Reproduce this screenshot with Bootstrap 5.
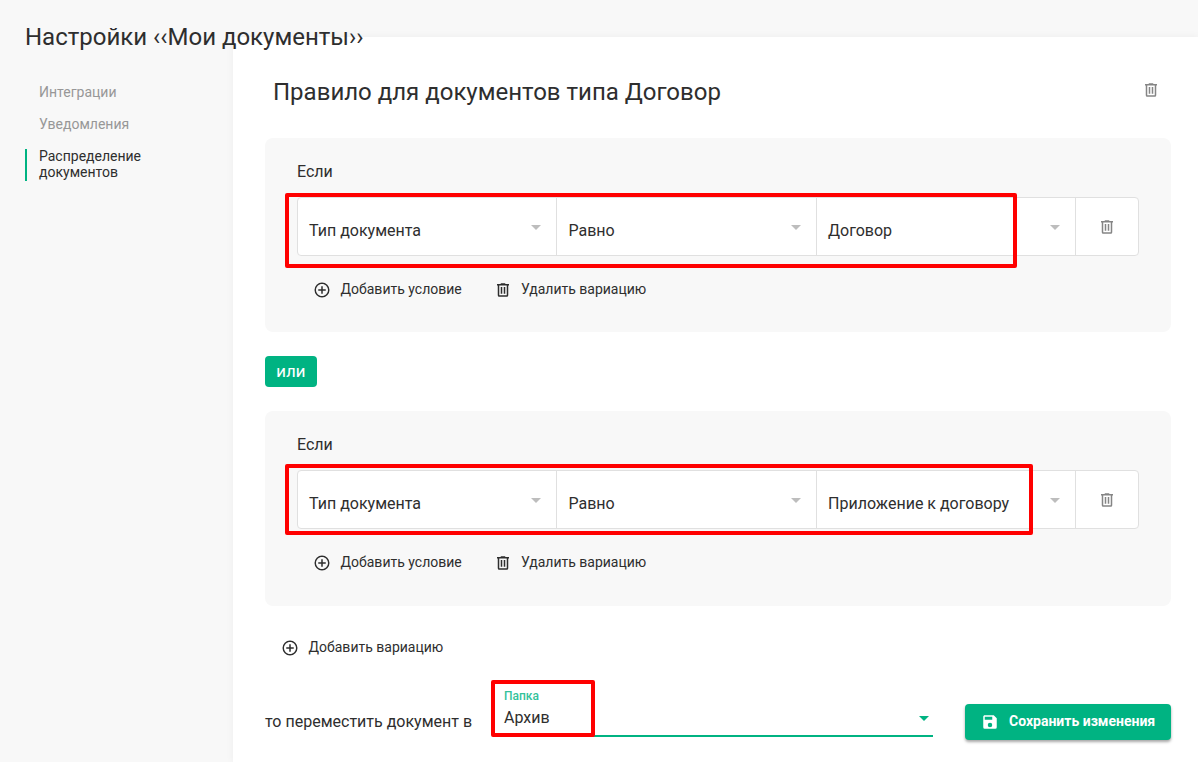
<!DOCTYPE html>
<html lang="ru">
<head>
<meta charset="utf-8">
<meta name="viewport" content="width=device-width, initial-scale=1">
<title>Настройки</title>
<link href="https://cdn.jsdelivr.net/npm/bootstrap@5.3.0/dist/css/bootstrap.min.css" rel="stylesheet">
<style>
body{background:#f8f8f8;color:#2e2e2e;font-family:Roboto,"Liberation Sans",sans-serif;font-size:16px;line-height:24px;height:762px;overflow:hidden}
svg{display:block;fill:currentColor;flex:none}
.page-title{height:37px;padding:21px 0 0 25px;font-size:24px;line-height:32px;font-weight:400;z-index:2;white-space:nowrap}
.side-menu{width:233px;padding:47px 0 0 25px}
.side-menu .nav-link{color:#979797;font-size:14px;line-height:16px;padding:0 0 0 14px;margin-bottom:16px;width:150px}
.side-menu .nav-link.active{color:#2e2e2e;background:linear-gradient(#00b382,#00b382) 0 1px/2px 100% no-repeat;padding-bottom:1px}
.sheet{height:725px;background:#fff;padding:39px 27px 0 32px;box-shadow:0 0 8px rgba(0,0,0,.05);min-width:0}
.sheet-head{height:62px}
.sheet-head svg{margin:5px 11px 0 0}
.rule-title{font-size:24px;line-height:32px;font-weight:400;padding-left:8px}
.muted-icon{color:#858585}
.panel{background:#f8f8f8;border-radius:8px;height:194px;padding:22px 32px 0}
.panel-last{height:195px}
.panel-last .actions svg:first-child{margin-top:2px}
.cond{height:59px;margin-top:13px;background:#fff;border:1px solid #e0e0e0;border-radius:4px;z-index:0}
.cell{width:259px;border-right:1px solid #e0e0e0;padding:8px 8px 0 11px}
.cell-mid{width:260px;padding-left:11.5px}
.cell svg{color:#bdbdbd;margin-top:-8px}
.cell-del{width:62px}
.frame{position:absolute;border:4px solid #f00;border-radius:2px;pointer-events:none;z-index:3}
.frame-1{left:-13px;top:-5px;width:732px;height:75px}
.frame-2{left:-13px;top:-7px;width:748px;height:71px}
.frame-3{left:0;top:-1px;width:104px;height:57px}
.flat{font-size:14px;line-height:20px}
.flat svg{margin-top:1px}
.actions{padding:23px 0 0 16px}
.actions span{margin-left:9.5px}
.actions span + svg{margin-left:32.5px}
.actions svg + span:last-child:not(:nth-child(2)){margin-left:8.8px}
.or-badge{background:#00b382;color:#fff;font-size:13px;font-weight:500;letter-spacing:.5px;padding-top:2px;width:52px;height:31px;border-radius:4px;margin:24px 0}
.target-row{margin-top:24px}
.target-text{width:226px;padding-top:29px}
.folder{width:442px;height:56px}
.folder-line{height:56px;margin-left:4px;width:438px;border-bottom:2px solid #00b382}
.folder-line svg{color:#00b382;margin:25px -3px 0 0}
.folder-name{font-size:12px;font-weight:500;line-height:14px;color:#33c29b;padding:8px 0 0 9px}
.folder-val{line-height:24px;padding-left:9px;margin-top:3px}
.save{background:#00b382;color:#fff;width:206px;height:36px;margin-top:23px;padding-left:16px;border-radius:4px;font-size:14px;font-weight:700;box-shadow:0 2px 3px rgba(0,0,0,.35)}
.save span{margin:-2px 0 0 10px}
</style>
</head>
<body>
<svg class="d-none">
<symbol id="trash" viewBox="0 0 24 24"><path d="M9,3V4H4V6H5V19A2,2 0 0,0 7,21H17A2,2 0 0,0 19,19V6H20V4H15V3H9M7,6H17V19H7V6M9,8V17H11V8H9M13,8V17H15V8H13Z"/></symbol>
<symbol id="plus" viewBox="0 0 24 24"><path d="M12,20C7.59,20 4,16.41 4,12C4,7.59 7.59,4 12,4C16.41,4 20,7.59 20,12C20,16.41 16.41,20 12,20M12,2A10,10 0 0,0 2,12A10,10 0 0,0 12,22A10,10 0 0,0 22,12A10,10 0 0,0 12,2M13,7H11V11H7V13H11V17H13V13H17V11H13V7Z"/></symbol>
<symbol id="down" viewBox="0 0 24 24"><path d="M7,10L12,15L17,10H7Z"/></symbol>
<symbol id="disk" viewBox="0 0 24 24"><path d="M15,9H5V5H15M12,19A3,3 0 0,1 9,16A3,3 0 0,1 12,13A3,3 0 0,1 15,16A3,3 0 0,1 12,19M17,3H5C3.89,3 3,3.9 3,5V19A2,2 0 0,0 5,21H19A2,2 0 0,0 21,19V7L17,3Z"/></symbol>
</svg>
<h1 class="page-title position-relative m-0">Настройки ‹‹Мои документы››</h1>
<div class="d-flex">
  <nav class="side-menu nav flex-column flex-shrink-0">
    <a class="nav-link">Интеграции</a>
    <a class="nav-link">Уведомления</a>
    <a class="nav-link active">Распределение документов</a>
  </nav>
  <main class="sheet flex-grow-1">
    <div class="sheet-head d-flex align-items-start justify-content-between">
      <h2 class="rule-title m-0">Правило для документов типа Договор</h2>
      <svg class="muted-icon" width="18" height="18"><use href="#trash"/></svg>
    </div>
    <section class="panel">
      <div>Если</div>
      <div class="cond d-flex position-relative">
        <div class="cell d-flex align-items-center justify-content-between"><span>Тип документа</span><svg width="24" height="24"><use href="#down"/></svg></div>
        <div class="cell cell-mid d-flex align-items-center justify-content-between"><span>Равно</span><svg width="24" height="24"><use href="#down"/></svg></div>
        <div class="cell d-flex align-items-center justify-content-between"><span>Договор</span><svg width="24" height="24"><use href="#down"/></svg></div>
        <div class="cell-del muted-icon d-flex align-items-center justify-content-center"><svg width="18" height="18"><use href="#trash"/></svg></div>
        <div class="frame frame-1"></div>
      </div>
      <div class="flat actions d-flex align-items-center">
        <svg width="18" height="18"><use href="#plus"/></svg><span>Добавить условие</span>
        <svg width="18" height="18"><use href="#trash"/></svg><span>Удалить вариацию</span>
      </div>
    </section>
    <div class="or-badge d-flex align-items-center justify-content-center">ИЛИ</div>
    <section class="panel panel-last">
      <div>Если</div>
      <div class="cond d-flex position-relative">
        <div class="cell d-flex align-items-center justify-content-between"><span>Тип документа</span><svg width="24" height="24"><use href="#down"/></svg></div>
        <div class="cell cell-mid d-flex align-items-center justify-content-between"><span>Равно</span><svg width="24" height="24"><use href="#down"/></svg></div>
        <div class="cell d-flex align-items-center justify-content-between"><span>Приложение к договору</span><svg width="24" height="24"><use href="#down"/></svg></div>
        <div class="cell-del muted-icon d-flex align-items-center justify-content-center"><svg width="18" height="18"><use href="#trash"/></svg></div>
        <div class="frame frame-2"></div>
      </div>
      <div class="flat actions d-flex align-items-center">
        <svg width="18" height="18"><use href="#plus"/></svg><span>Добавить условие</span>
        <svg width="18" height="18"><use href="#trash"/></svg><span>Удалить вариацию</span>
      </div>
    </section>
    <div class="flat actions d-flex align-items-center" style="padding-top:31px">
      <svg width="18" height="18"><use href="#plus"/></svg><span>Добавить вариацию</span>
    </div>
    <div class="target-row d-flex align-items-start">
      <div class="target-text">то переместить документ в</div>
      <div class="folder position-relative">
        <div class="folder-line d-flex justify-content-between">
          <div><div class="folder-name">Папка</div><div class="folder-val">Архив</div></div>
          <svg width="24" height="24"><use href="#down"/></svg>
        </div>
        <div class="frame frame-3"></div>
      </div>
      <div class="save d-flex align-items-center ms-auto"><svg width="18" height="18"><use href="#disk"/></svg><span>Сохранить изменения</span></div>
    </div>
  </main>
</div>
<script src="https://cdn.jsdelivr.net/npm/bootstrap@5.3.0/dist/js/bootstrap.bundle.min.js"></script>
</body>
</html>
